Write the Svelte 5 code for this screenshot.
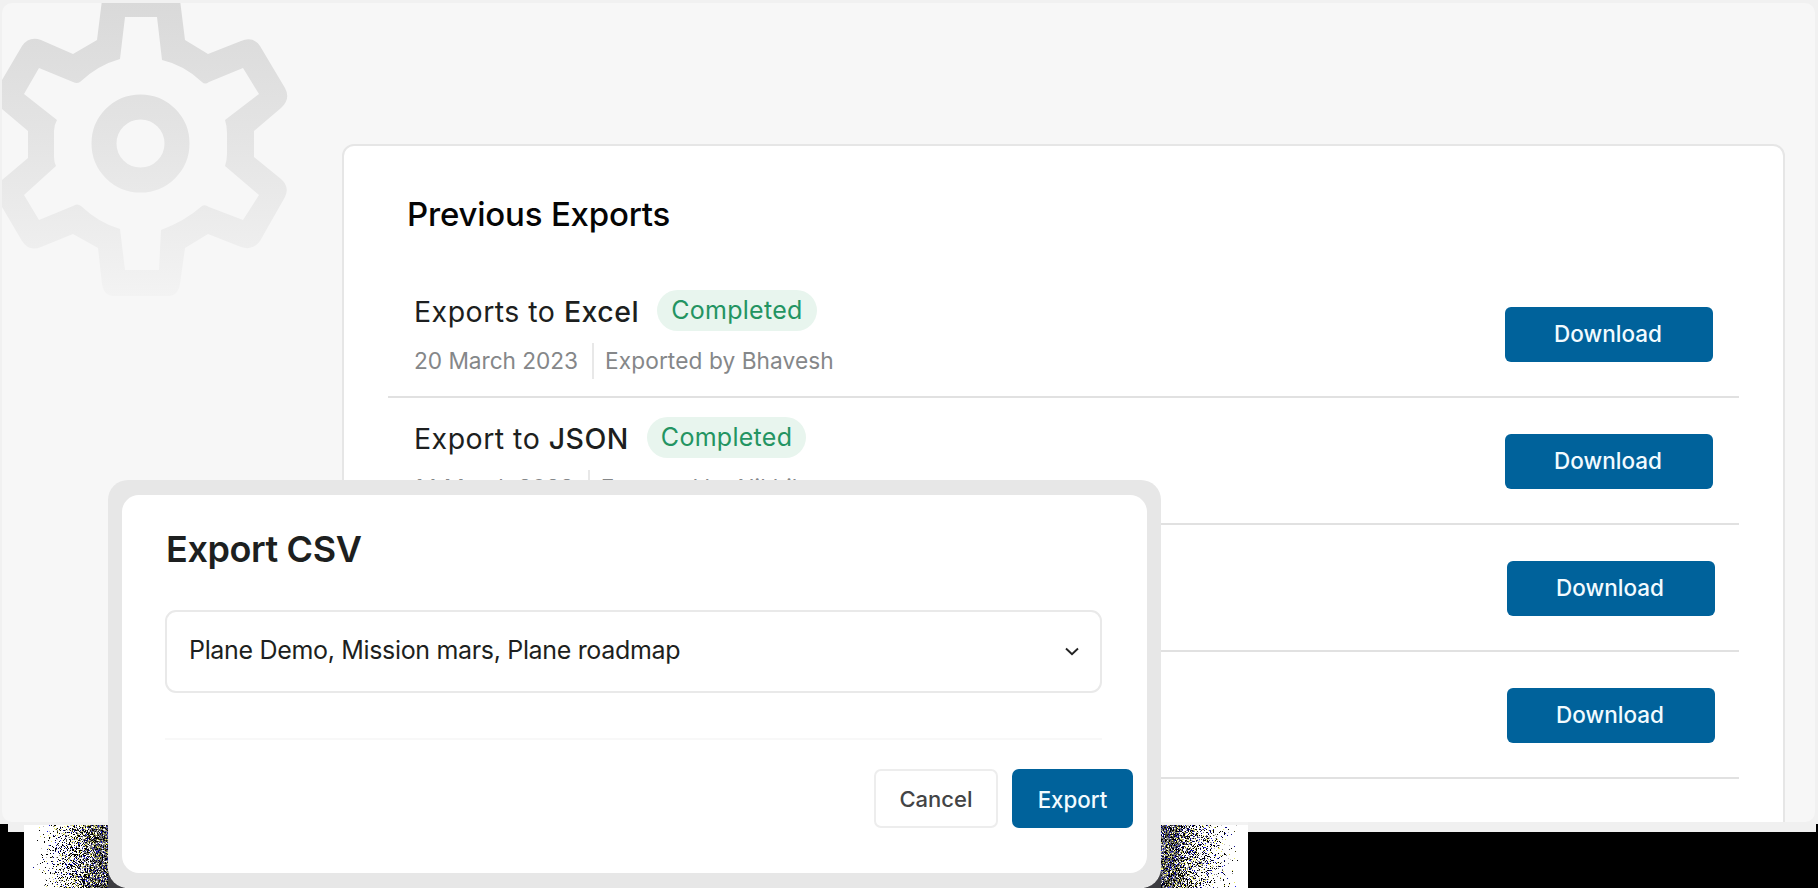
<script>
  const rows = [
    { lead: 'Exports to', type: 'Excel', date: '20 March 2023', by: 'Exported by Bhavesh' },
    { lead: 'Export to', type: 'JSON', date: '14 March 2023', by: 'Exported by Nikhil' },
    { lead: '', type: '', date: '', by: '' },
    { lead: '', type: '', date: '', by: '' }
  ];

  // Speckled shadow: pixel density grows towards the dialog edge.
  const shades = ['#000', '#808080', '#0c0c8c', '#e6e660', '#44444c', '#c0c0c0', '#fff', '#4a4a18', '#2020e0'];
  const outer = [0.36, 0.44, 0.56, 0.7, 0.74, 0.87, 0.94, 0.97, 1];
  const inner = [0.26, 0.58, 0.66, 0.73, 0.84, 0.88, 0.9, 0.98, 1];
  function grain(width, height, seed, flip) {
    let s = seed;
    const rnd = () => {
      s = (s * 1664525 + 1013904223) >>> 0;
      return s / 4294967296;
    };
    const paths = shades.map(() => '');
    for (let y = 0; y < height; y++) {
      for (let i = 0; i < width; i++) {
        const t = i / width;
        const density = Math.min(0.93, Math.pow(Math.max(0, (t - 0.08) / 0.8), 1.5));
        const a = rnd();
        const b = rnd();
        const c = rnd();
        if (a > density) continue;
        const table = c < (t - 0.6) * 3.5 ? inner : outer;
        const k = table.findIndex((limit) => b <= limit);
        paths[k] += `M${flip ? width - 1 - i : i} ${y}h1v1h-1z`;
      }
    }
    return paths;
  }
  const leftGrain = grain(84, 63, 71, false);
  const rightGrain = grain(87, 63, 913, true);
</script>

<div class="stage">
  <div class="frame">
    <svg class="gear" viewBox="0 0 290 300" aria-hidden="true">
      <defs>
        <linearGradient id="fade" x1="0" y1="0" x2="0" y2="297" gradientUnits="userSpaceOnUse">
          <stop offset="0" stop-color="#d9d9d9" />
          <stop offset="0.5" stop-color="#e5e5e5" />
          <stop offset="1" stop-color="#f3f3f3" />
        </linearGradient>
      </defs>
      <path
        fill="url(#fade)"
        fill-rule="evenodd"
        d="M102 0H180L185 40L208 54L241 41Q253 36 260 46L285 88Q291 99 281 108L254 131V157L281 179Q290 187 285 197L260 241Q253 251 241 247L208 234L185 248L180 284Q178 296 168 296H114Q104 296 102 284L98 248L73 234L41 247Q29 252 22 241L2 207V180L28 158V131L2 109V80L22 46Q29 36 41 40L73 54L97 40ZM125 17L120 59Q98 65 80 82Q77 84 73 82L39 68L24 94L57 120Q54 125 54 131V157Q54 162 56 166L24 195L39 220L73 206Q77 203 81 206Q99 223 120 229L125 270H159L161 230Q185 221 202 206Q205 204 209 207L243 220L259 195L225 166Q227 160 227 154V133Q227 126 225 120L259 94L243 68L209 82Q205 85 202 82Q184 65 162 60L157 17Z"
      />
      <circle cx="140.500" cy="143.500" r="36.500" fill="none" stroke="url(#fade)" stroke-width="25" />
    </svg>

    <section class="panel">
      <h2>Previous Exports</h2>
      <div class="list">
        {#each rows as row, i}
          <div class="row">
            <div class="info">
              {#if row.type}
                <div class="title">
                  <span class="name">{row.lead} <b>{row.type}</b></span>
                  <span class="badge">Completed</span>
                </div>
                <div class="meta">
                  <span class="date">{row.date}</span>
                  <span class="by">{row.by}</span>
                </div>
              {/if}
            </div>
            <button class="download" class:shifted={i > 1}>Download</button>
          </div>
        {/each}
      </div>
    </section>
  </div>

  <div class="foot" aria-hidden="true">
    <svg class="base" width="1818" height="66" shape-rendering="crispEdges">
      <path d="M0 0H1818V66H0Z" fill="#f0f0f0" />
      <path d="M0 2H8V10H24V66H0Z" />
      <path d="M24 3H1248V66H24Z" fill="#fff" />
      <path d="M1161 0H1248V3H1161Z" fill="#f3f3f3" />
      <path d="M1248 10H1816V2H1818V66H1248Z" />
      <g transform="translate(24 3)">
        {#each leftGrain as d, i}<path {d} fill={shades[i]} />{/each}
      </g>
      <g transform="translate(1161 3)">
        {#each rightGrain as d, i}<path {d} fill={shades[i]} />{/each}
      </g>
      <path d="M108 46V66H128Q110 64 108 46ZM1161 46V66H1141Q1159 64 1161 46Z" fill="#3c3c40" />
    </svg>
  </div>

  <div class="dialog">
    <div class="sheet">
      <h1>Export CSV</h1>
      <div class="select">
        <span>Plane Demo, Mission mars, Plane roadmap</span>
        <svg width="14" height="9" viewBox="0 0 14 9" aria-hidden="true">
          <path d="M1 1.500L7 7.300L13 1.500" fill="none" stroke="#222" stroke-width="1.900" />
        </svg>
      </div>
      <div class="actions">
        <button class="cancel">Cancel</button>
        <button class="export">Export</button>
      </div>
    </div>
  </div>
</div>

<style>
  :global(body) {
    margin: 0;
    overflow: hidden;
  }
  * {
    box-sizing: border-box;
  }
  .stage {
    position: relative;
    width: 1818px;
    height: 888px;
    overflow: hidden;
    background: #f1f1f1;
    font-family: Inter, sans-serif;
    color: #1d1f20;
  }
  .frame {
    position: relative;
    height: 819px;
    margin: 3px 3px 0 2px;
    padding: 141px 30px 0 340px;
    border-radius: 10px;
    overflow: hidden;
    background: #f7f7f7;
  }
  .gear {
    position: absolute;
    left: 0;
    top: 0;
    width: 290px;
    height: 300px;
    margin: -3px 0 0 -2px;
  }
  .panel {
    width: 1443px;
    height: 700px;
    padding: 48px 44px 0;
    border: 2px solid #e6e6e6;
    border-radius: 12px;
    background: #fff;
  }
  h2 {
    margin: 0 0 0 19px;
    font-size: 33px;
    line-height: 40px;
    font-weight: 500;
    letter-spacing: -0.200px;
    color: #050505;
    white-space: nowrap;
  }
  .list {
    margin-top: 37px;
  }
  .row {
    display: flex;
    justify-content: space-between;
    height: 127px;
    padding: 19px 26px 0 26px;
    border-bottom: 2px solid #e1e1e1;
    width: 1351px;
  }
  .title {
    display: flex;
    align-items: center;
    gap: 18px;
    height: 41px;
    font-size: 28.500px;
    letter-spacing: 0.480px;
    white-space: nowrap;
  }
  .name {
    padding-top: 2px;
  }
  .title b {
    font-weight: 500;
  }
  .badge {
    height: 41px;
    padding: 0 14px;
    border-radius: 21px;
    background: #e8f5ee;
    color: #239462;
    font-size: 25px;
    line-height: 40px;
    letter-spacing: 0.280px;
  }
  .meta {
    display: flex;
    align-items: center;
    height: 36px;
    margin-top: 12px;
    font-size: 22.700px;
    line-height: 36px;
    color: #858789;
    white-space: nowrap;
  }
  .date {
    letter-spacing: -0.050px;
  }
  .by {
    height: 36px;
    margin-left: 14px;
    padding-left: 11px;
    border-left: 2px solid #e8e8e8;
    letter-spacing: 0.080px;
  }
  button {
    padding: 0;
    border: 0;
    font-family: inherit;
    font-weight: 500;
  }
  .download {
    width: 208px;
    height: 55px;
    margin-top: 17px;
    padding: 0 2px 2px 0;
    border-radius: 6px;
    background: #00629b;
    color: #f2fbff;
    font-size: 22.500px;
  }
  .shifted {
    position: relative;
    left: 2px;
  }
  .foot {
    height: 66px;
  }
  .base {
    display: block;
  }
  .dialog {
    position: absolute;
    left: 108px;
    top: 480px;
    width: 1053px;
    height: 408px;
    padding: 15px 14px 15px 14px;
    border-radius: 20px;
    background: #e7e7e7;
  }
  .sheet {
    height: 378px;
    padding: 32px 14px 0 43px;
    border-radius: 17px;
    background: #fff;
  }
  h1 {
    margin: 0 0 0 1px;
    font-size: 36px;
    line-height: 44px;
    font-weight: 600;
    letter-spacing: -0.400px;
    white-space: nowrap;
  }
  .select {
    display: flex;
    align-items: center;
    justify-content: space-between;
    width: 937px;
    height: 83px;
    margin-top: 39px;
    padding: 0 21px 3px 22px;
    border: 2px solid #e9e9e9;
    border-radius: 11px;
    font-size: 25px;
    letter-spacing: -0.330px;
  }
  .select svg {
    position: relative;
    top: 1px;
  }
  .actions {
    display: flex;
    justify-content: flex-end;
    gap: 14px;
    margin-top: 45px;
    padding-top: 31px;
    position: relative;
  }
  .actions::before {
    content: '';
    position: absolute;
    left: 0;
    top: 0;
    width: 937px;
    height: 2px;
    background: #f8f8f8;
  }
  .cancel,
  .export {
    height: 59px;
    border-radius: 7px;
    font-size: 22.300px;
  }
  .cancel {
    width: 124px;
    padding-top: 1px;
    border: 2px solid #ededed;
    background: #fff;
    color: #434445;
    font-size: 22px;
  }
  .export {
    width: 121px;
    padding-top: 1px;
    background: #00629b;
    color: #f2fbff;
  }
</style>
